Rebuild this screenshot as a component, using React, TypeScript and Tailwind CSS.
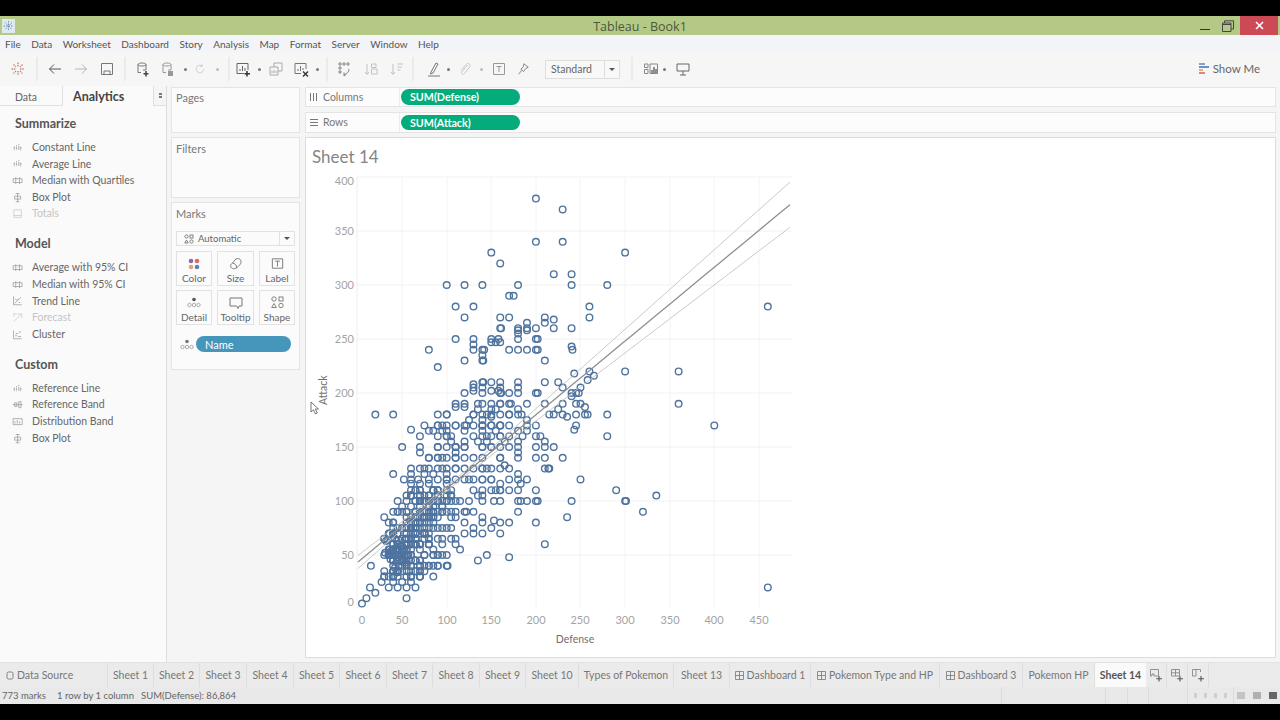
import React from "react";

// rows of the scatter plot: attack -> list of defense values
const rows: [number, number[]][] = [
  [380, [200]], [370, [230]], [340, [200, 230]], [330, [150, 300]], [320, [160]], [310, [220, 240]],
  [300, [100, 120, 140, 180, 240, 280]], [290, [170, 175]], [280, [110, 130, 260, 460]],
  [270, [120, 160, 170, 210, 260]], [268, [220]], [265, [190, 210]], [260, [160, 161, 180, 190, 200, 220, 240]],
  [258, [180, 190]], [255, [180]], [250, [110, 130, 150, 158, 180, 200, 202]], [247, [150, 155, 160]],
  [245, [130]], [243, [240]], [240, [80, 130, 140, 142, 170, 180, 190, 200, 202, 241]],
  [235, [140]], [230, [120, 140, 141, 210]], [224, [90]], [220, [260, 300, 360]], [216, [265]], [218, [243]],
  [212, [258]], [210, [140, 141, 150, 160, 180, 210, 225]], [208, [130]], [205, [130, 140, 160, 180, 230, 250]],
  [202, [130, 150, 158]], [200, [120, 140, 160, 161, 170, 180, 200, 202, 240, 245, 248]], [197, [240]],
  [190, [110, 120, 135, 150, 160, 170, 172, 190, 210, 230, 245, 250, 360]], [187, [255, 110, 120]],
  [185, [135, 150, 155, 180, 225]], [180, [20, 40, 90, 100, 130, 140, 145, 160, 170, 180, 184, 215, 220, 230, 245, 255, 258, 280]],
  [178, [235, 150]], [175, [125, 140, 190]], [170, [75, 90, 95, 110, 120, 122, 130, 140, 150, 160, 170, 190, 200, 245, 400]],
  [166, [243, 60]], [165, [80, 85, 95, 100, 120, 140, 155, 180, 190]],
  [160, [70, 90, 100, 105, 130, 140, 145, 160, 170, 185, 200, 205, 280]], [155, [105, 120, 135, 145, 180, 165, 210]],
  [150, [50, 70, 100, 120, 140, 150, 160, 170, 180, 200, 210, 220]], [145, [70, 110, 180]],
  [140, [80, 90, 95, 100, 110, 130, 140, 160, 180, 200, 210, 230]], [133, [165]],
  [130, [60, 70, 75, 80, 90, 95, 100, 110, 120, 130, 140, 145, 160, 170, 210, 214, 215]],
  [125, [40, 60, 75, 85, 100, 180]], [120, [52, 60, 68, 80, 90, 100, 110, 120, 125, 130, 140, 150, 180, 190, 250]],
  [116, [60, 70, 80, 100, 160, 183]], [110, [60, 70, 85, 90, 100, 105, 130, 140, 150, 155, 160, 170, 180, 200, 290]],
  [105, [55, 60, 70, 80, 100, 105, 135, 140, 335]],
  [100, [45, 65, 70, 75, 80, 90, 100, 110, 115, 125, 140, 153, 160, 180, 183, 190, 200, 202, 240, 300, 301]],
  [90, [40, 45, 110, 120, 122, 130, 180, 320]], [85, [140, 235]], [82, [153]],
  [80, [120, 140, 160, 170, 200]], [75, [130, 150]], [70, [120, 130, 140, 160]],
  [65, [110]], [60, [110, 210]], [55, [115]], [50, [90, 95, 100, 145]], [48, [170]], [45, [135]],
  [40, [15, 60, 70, 80, 85, 90, 100, 101]], [35, [30]], [30, [85, 30, 35, 40, 45]],
  [25, [27, 60, 40, 50]], [20, [14, 35, 55, 65, 45, 460]], [15, [20]], [10, [10, 55]], [5, [5]],
];

const makePoints = () => {
  const pts: [number, number][] = [];
  rows.forEach(([a, ds]) => ds.forEach((d) => pts.push([d, a])));
  // the dense part near the origin
  let s = 1234;
  const rnd = () => {
    s = (s * 16807) % 2147483647;
    return s / 2147483647;
  };
  const gauss = () => (rnd() + rnd() + rnd() + rnd() - 2) * 1.2;
  for (let i = 0; i < 330; i++) {
    const t = gauss();
    const d = 65 + t * 30 + gauss() * 20;
    const a = 70 + t * 28 + gauss() * 26;
    if (d < 28 || a < 28 || d > 108 || a > 112) continue;
    pts.push([Math.round(d / 5) * 5, Math.round(a / 5) * 5]);
  }
  for (let i = 0; i < 35; i++) {
    pts.push([Math.round(46 + gauss() * 12), Math.round(52 + gauss() * 12)]);
  }
  for (let i = 0; i < 40; i++) {
    const d = 75 + rnd() * 100;
    const a = 110 + rnd() * 80;
    pts.push([Math.round(d / 10) * 10, Math.round(a / 10) * 10]);
  }
  return pts;
};

const points = makePoints();
const px = (d: number) => 357.5 + d * 0.892;
const py = (a: number) => 609 - a * 1.08;

const line = (offset: number) => {
  const out: string[] = [];
  for (let x = 358; x <= 794; x += 12) {
    const y = 562 - (x - 358) * (359 / 434);
    const w = Math.sqrt(6 + Math.pow((x - 450) * 0.066, 2));
    out.push(`${x},${(y + offset * w).toFixed(1)}`);
  }
  return out.join(" ");
};

const Chart = () => (
  <svg viewBox="306 172 969 484" className="w-[969px] h-[484px] block" style={{ fontFamily: "Lato, sans-serif" }}>
    {[402, 447, 491, 536, 580, 625, 670, 714, 759].map((x) => (
      <line key={x} x1={x} x2={x} y1={177} y2={609} stroke="#f4f4f4" />
    ))}
    {[177, 231, 285, 339, 393, 447, 501, 555].map((y) => (
      <line key={y} x1={357} x2={792} y1={y} y2={y} stroke="#f2f2f2" />
    ))}
    <line x1={357} x2={357} y1={177} y2={609} stroke="#efefef" />
    {points.map(([d, a], i) => (
      <circle key={i} cx={px(d)} cy={py(a)} r={3.3} fill="none" stroke="#4f739f" strokeWidth={1.4} />
    ))}
    <polyline points={line(0)} fill="none" stroke="#8f8f8f" strokeWidth={1.3} />
    <polyline points={line(-1)} fill="none" stroke="#c4c4c4" strokeWidth={0.9} />
    <polyline points={line(1)} fill="none" stroke="#c4c4c4" strokeWidth={0.9} />
    {[["400", 185], ["350", 235], ["300", 289], ["250", 343], ["200", 397], ["150", 451], ["100", 505], ["50", 559], ["0", 606]].map(([t, y]) => (
      <text key={t} x={354} y={y} textAnchor="end" fontSize={11} fill="#a3a3a3">{t}</text>
    ))}
    {[["0", 362], ["50", 402], ["100", 447], ["150", 491], ["200", 536], ["250", 580], ["300", 625], ["350", 670], ["400", 714], ["450", 759]].map(([t, x]) => (
      <text key={t} x={x} y={624} textAnchor="middle" fontSize={11} fill="#a3a3a3">{t}</text>
    ))}
    <text x={575} y={643} textAnchor="middle" fontSize={10.5} fill="#6f6f6f">Defense</text>
    <text transform="translate(327 405) rotate(-90)" x={0} y={0} fontSize={10.5} fill="#6f6f6f">Attack</text>
  </svg>
);

const Ico = ({ children, c = "#8a8a8a", s = 16 }: { children: React.ReactNode; c?: string; s?: number }) => (
  <svg width={s} height={s} viewBox="0 0 16 16" fill="none" stroke={c} strokeWidth={1}>{children}</svg>
);

const Dd = ({ c = "#777" }: { c?: string }) => <span className="w-[3px] h-[3px] shrink-0 rounded-full" style={{ background: c }} />;
const Sep = () => <span className="w-[2px] h-[24px] bg-[#ebebeb] shrink-0" />;

const Cyl = ({ c = "#777", mark }: { c?: string; mark: React.ReactNode }) => (
  <Ico c={c}>
    <path d="M3 3.5C3 1.5 11 1.5 11 3.5V9H8M3 3.5V11.5H6M3 3.5C3 5.5 11 5.5 11 3.5" />
    {mark}
  </Ico>
);

const Toolbar = () => (
  <div className="h-[34px] bg-[#f6f6f6] flex items-center text-[#555] shrink-0">
    <div className="w-[36px] flex justify-center">
      <Ico c="#c98a7c">
        <path d="M8 1.5V6M8 10V14.5M1.5 8H6M10 8H14.5M3.5 3.5L6 6M10 10L12.5 12.5M12.5 3.5L10 6M6 10L3.5 12.5" strokeDasharray="1.5 0.8" strokeWidth={1.4} />
      </Ico>
    </div>
    <Sep />
    <div className="w-[34px] flex justify-center"><Ico c="#555"><path d="M14 8H2.5M7 3.5L2.5 8L7 12.5" /></Ico></div>
    <div className="w-[18px] flex justify-center"><Ico c="#b5b5b5"><path d="M2 8H13.5M9 3.5L13.5 8L9 12.5" /></Ico></div>
    <div className="w-[34px] flex justify-center"><Ico c="#777"><path d="M2.5 2.5H13.5V13.5H2.5ZM5 13.5V10H11V13.5" /></Ico></div>
    <Sep />
    <div className="w-[34px] flex justify-center"><Cyl mark={<path d="M11 10V15.5M8.5 12.8H13.5" stroke="#444" strokeWidth={1.5} />} /></div>
    <div className="w-[16px] flex justify-center"><Cyl c="#999" mark={<rect x="8.5" y="10.5" width="4" height="4" fill="#999" />} /></div>
    <div className="w-[18px] flex justify-center"><Dd /></div>
    <div className="w-[12px] flex justify-center"><Ico c="#c4c4c4" s={14}><path d="M13 8A5 5 0 1 1 11 4M11 1.5V4.5H8" /></Ico></div>
    <div className="w-[22px] flex justify-center"><Dd c="#bbb" /></div>
    <Sep />
    <div className="w-[26px] flex justify-center">
      <Ico c="#666"><path d="M2 2.5H13V9M2 2.5V12.5H9M5 10V8M7.5 10V5M10 10V7" /><path d="M12 10V15.5M9.5 12.8H15" stroke="#333" strokeWidth={1.5} /></Ico>
    </div>
    <div className="w-[6px] flex justify-center"><Dd /></div>
    <div className="w-[28px] flex justify-center"><Ico c="#aaa"><path d="M2 6H10V14H2ZM6 6V2H14V10H10M4 12V10M6 12V9M8 12V10" /></Ico></div>
    <div className="w-[22px] flex justify-center">
      <Ico c="#777"><path d="M2 2.5H13V8M2 2.5V12.5H8M5 10V8M7.5 10V5M10 9V7" /><path d="M10 10.5L15 15.5M15 10.5L10 15.5" stroke="#333" strokeWidth={1.4} /></Ico>
    </div>
    <div className="w-[10px] flex justify-center"><Dd /></div>
    <div className="w-[4px]" />
    <Sep />
    <div className="w-[32px] flex justify-center"><Ico c="#888"><path d="M3 2H5V4H3ZM7 2H9V4H7ZM11 2H13V4H11ZM3 6H5V8H3ZM3 10H5V12H3ZM13 8C13 11 11 13 8 13.5M8 11.5V15L10 13.5" /></Ico></div>
    <div className="w-[22px] flex justify-center"><Ico c="#c2c2c2"><path d="M4 3V13M2 11L4 13.5L6 11M8.5 3H13V6.5H8.5ZM8.5 8H14V13H8.5Z" /></Ico></div>
    <div className="w-[30px] flex justify-center"><Ico c="#c2c2c2"><path d="M4 3V13M2 11L4 13.5L6 11M8.5 3H14M8.5 6H13M8.5 9H11.5" /></Ico></div>
    <Sep />
    <div className="w-[8px]" />
    <div className="w-[24px] flex justify-center"><Ico c="#777"><path d="M5 11L10 2L12 3L7 12L4.5 13ZM2 15H14" /></Ico></div>
    <div className="w-[4px] flex justify-center"><Dd /></div>
    <div className="w-[30px] flex justify-center"><Ico c="#c9c9c9"><path d="M10.5 4L5 10.5C3.5 12.5 6 14.5 7.5 12.5L12.5 6C14 3.5 11 1 9 3.5L4 9.5" /></Ico></div>
    <div className="w-[2px] flex justify-center"><Dd c="#bbb" /></div>
    <div className="w-[34px] flex justify-center"><Ico c="#999"><path d="M2.5 2.5H13.5V13.5H2.5ZM5.5 5.5H10.5M8 5.5V11" /></Ico></div>
    <div className="w-[14px] flex justify-center"><Ico c="#777"><path d="M9 2L14 6L11 7.5L8.5 11L5.5 8L8.5 5.5ZM6.5 9.5L3 14" /></Ico></div>
    <div className="w-[15px]" />
    <div className="w-[75px] h-[19px] border border-[#dedede] bg-[#f8f8f8] flex items-center text-[10.5px] text-[#666] pl-[5px] shrink-0">
      <span className="flex-1 pt-[1px]">Standard</span>
      <span className="w-[15px] h-full border-l border-[#dedede] flex items-center justify-center">
        <span className="w-0 h-0 border-x-[3px] border-x-transparent border-t-[3px] border-t-[#555]" />
      </span>
    </div>
    <div className="w-[11px]" />
    <Sep />
    <div className="w-[6px]" />
    <div className="w-[24px] flex justify-center">
      <Ico c="#888"><path d="M1.5 3H5V6.5H1.5ZM1.5 8.5H5V12.5H1.5ZM7 3H14.5V12.5H7Z" /><path d="M9 12V9M11 12V6M13 12V8" stroke="#666" strokeWidth={1.4} /></Ico>
    </div>
    <div className="w-[2px] flex justify-center"><Dd /></div>
    <div className="w-[36px] flex justify-center"><Ico c="#666"><path d="M2 3H14V10H2ZM8 10V14M5 14H11" /></Ico></div>
    <div className="ml-auto flex items-center gap-[4px] pr-[20px] text-[11.5px] text-[#666]">
      <svg width="10" height="14" viewBox="0 0 10 14">
        <rect x="0" y="1" width="6" height="2" fill="#8aa0c8" />
        <rect x="0" y="4" width="10" height="2" fill="#6f8fc9" />
        <rect x="0" y="7" width="4" height="2" fill="#e6b07a" />
        <rect x="0" y="10" width="6" height="2" fill="#dd8585" />
      </svg>
      <span>Show Me</span>
    </div>
  </div>
);

const bars = <path d="M3 6V11M6 4V11M9 2.5V11M11.5 6V11M2 8H13" strokeDasharray="2 1" />;
const band = <path d="M1.5 5H13.5V10H1.5ZM5 3V12M10 3V12" />;
const box = <path d="M7.5 2V13M3.5 5.5H11.5V9.5H3.5ZM5 2H10M5 13H10" />;

const Item = ({ icon, label, off }: { icon: React.ReactNode; label: string; off?: boolean }) => (
  <div className={`h-[16.6px] flex items-center gap-[8px] pl-[12px] text-[10.5px] ${off ? "text-[#c4c4c4]" : "text-[#666]"}`}>
    <Ico c={off ? "#c8c8c8" : "#9a9a9a"} s={12}>{icon}</Ico>
    <span>{label}</span>
  </div>
);

const Section = ({ title, children }: { title: string; children: React.ReactNode }) => (
  <div className="mb-[13px]">
    <div className="pl-[15px] text-[12.5px] font-bold text-[#555] h-[18px] mb-[6.5px] leading-[18px]">{title}</div>
    {children}
  </div>
);

const AnalyticsPane = () => (
  <div className="w-[167px] shrink-0 bg-[#fafafa] border-r border-[#dcdcdc] h-full">
    <div className="h-[21px] flex border-b border-transparent">
      <div className="w-[63px] border-r border-b border-[#e0e0e0] pl-[15px] text-[10.5px] text-[#666] leading-[22px]">Data</div>
      <div className="w-[90px] pl-[10px] text-[12.5px] font-bold text-[#444] leading-[22px]">Analytics</div>
      <div className="flex-1 border-l border-b border-[#e0e0e0] flex flex-col items-center justify-center gap-[1px] bg-[#f5f5f5]">
        <span className="w-[3px] h-[2px] bg-[#777]" />
        <span className="w-[3px] h-[2px] bg-[#777]" />
      </div>
    </div>
    <div className="pt-[8px]">
      <Section title="Summarize">
        <Item icon={bars} label="Constant Line" />
        <Item icon={bars} label="Average Line" />
        <Item icon={band} label="Median with Quartiles" />
        <Item icon={box} label="Box Plot" />
        <Item icon={<path d="M2.5 2.5H12.5V12.5H2.5ZM2.5 10H12.5" />} label="Totals" off />
      </Section>
      <Section title="Model">
        <Item icon={band} label="Average with 95% CI" />
        <Item icon={band} label="Median with 95% CI" />
        <Item icon={<path d="M2 2V13H13M3.5 11L12 3M4 5L6 7L8 5M9 10H11" />} label="Trend Line" />
        <Item icon={<path d="M2 13L12 3M7 2.5H13V8.5M2.5 6V2.5H6" />} label="Forecast" off />
        <Item icon={<path d="M2 2V13H13M4 9H7M5 6H8M9 4H12M8 10H12" />} label="Cluster" />
      </Section>
      <Section title="Custom">
        <Item icon={bars} label="Reference Line" />
        <Item icon={<path d="M1 7.5H14M3.5 5H6.5V10H3.5ZM9 3.5H12V11.5H9Z" />} label="Reference Band" />
        <Item icon={<path d="M1.5 3.5H13.5V11.5H1.5ZM4 10V7M7 10V5M10 10V7" />} label="Distribution Band" />
        <Item icon={box} label="Box Plot" />
      </Section>
    </div>
  </div>
);

const Card = ({ title, className }: { title: string; className: string }) => (
  <div className={`bg-[#fbfbfb] border border-[#e4e4e4] pl-[4px] text-[11px] text-[#777] ${className}`}>{title}</div>
);

const MarkBtn = ({ icon, label, className }: { icon: React.ReactNode; label: string; className: string }) => (
  <div className={`h-[35px] border border-[#e2e2e2] flex flex-col items-center pt-[3px] text-[10px] leading-[12px] text-[#666] ${className}`}>
    <span className="h-[17px] flex items-center">{icon}</span>
    <span>{label}</span>
  </div>
);

const dots = (
  <svg width="14" height="14" viewBox="0 0 14 14">
    <circle cx="4" cy="4" r="2.3" fill="#8d6aa6" />
    <circle cx="10" cy="4" r="2.3" fill="#df6b6b" />
    <circle cx="4" cy="10" r="2.3" fill="#e9a070" />
    <circle cx="10" cy="10" r="2.3" fill="#5b84b8" />
  </svg>
);

const detail = (c = "#555") => (
  <svg width="14" height="11" viewBox="0 0 14 11" fill="none" stroke="#999" strokeWidth="0.8">
    <circle cx="7" cy="2.5" r="1.8" fill={c} stroke="none" />
    <circle cx="2.5" cy="8" r="1.7" />
    <circle cx="7" cy="8" r="1.7" />
    <circle cx="11.5" cy="8" r="1.7" />
  </svg>
);

const MarksCard = () => (
  <div className="bg-[#fbfbfb] border border-[#e4e4e4] h-[168px] px-[4px] pt-[4px]">
    <div className="text-[11px] text-[#777] h-[14px] leading-[14px] mb-[10px]">Marks</div>
    <div className="h-[15px] border border-[#e2e2e2] flex items-center text-[9.5px] text-[#666]">
      <span className="flex items-center gap-[4px] pl-[7px] pt-[1px] flex-1">
        <svg width="10" height="10" viewBox="0 0 10 10" fill="none" stroke="#777" strokeWidth="0.9">
          <circle cx="2.5" cy="2.5" r="1.6" />
          <rect x="6" y="1" width="3" height="3" />
          <path d="M2.5 6L4.2 9H.8Z" />
          <circle cx="7.5" cy="7.5" r="1.6" />
        </svg>
        Automatic
      </span>
      <span className="w-[15px] h-full border-l border-[#e2e2e2] flex items-center justify-center">
        <span className="w-0 h-0 border-x-[3px] border-x-transparent border-t-[3px] border-t-[#555]" />
      </span>
    </div>
    <div className="flex justify-between mt-[5px]">
      <MarkBtn icon={dots} label="Color" className="w-[36px]" />
      <MarkBtn
        icon={<Ico c="#777"><path d="M9.5 2.5C13 2.5 14 6 12 8.5C10 11 7.5 13.5 4.5 12.5C2 11.5 2 8.5 4.5 7C6.5 5.5 7 2.5 9.5 2.5Z" /><path d="M4.5 7C7 7.5 9 9.5 8.5 12" /></Ico>}
        label="Size"
        className="w-[37px]"
      />
      <MarkBtn icon={<Ico c="#777" s={15}><path d="M2.5 3H13.5V13H2.5ZM5.5 5.5H10.5M8 5.5V11" /></Ico>} label="Label" className="w-[36px]" />
    </div>
    <div className="flex justify-between mt-[4px]">
      <MarkBtn icon={detail()} label="Detail" className="w-[36px]" />
      <MarkBtn icon={<Ico c="#777"><path d="M2 3H14V11H11L10 13.5L8.5 11H2Z" /></Ico>} label="Tooltip" className="w-[37px]" />
      <MarkBtn
        icon={
          <svg width="15" height="15" viewBox="0 0 15 15" fill="none" stroke="#777" strokeWidth="0.9">
            <circle cx="4" cy="4" r="2.2" />
            <rect x="9" y="2" width="4" height="4" />
            <path d="M4 8.5L6.3 12.5H1.7Z" />
            <circle cx="11" cy="10.5" r="2.2" />
          </svg>
        }
        label="Shape"
        className="w-[36px]"
      />
    </div>
    <div className="flex items-center mt-[11px] pl-[4px] gap-[2px]">
      {detail("#777")}
      <span className="w-[95px] h-[16px] rounded-full bg-[#4695bb] text-white text-[11px] leading-[18px] pl-[9px]">Name</span>
    </div>
  </div>
);

const Shelf = ({ icon, label, pill, className }: { icon: React.ReactNode; label: string; pill: string; className: string }) => (
  <div className={`bg-[#fcfcfc] border border-[#e4e4e4] flex items-center ${className}`}>
    <div className="w-[94px] h-full flex items-center gap-[4px] pl-[2px] border-r border-[#ececec] text-[10.5px] text-[#777]">
      <span className="w-[11px] flex justify-center">{icon}</span>
      <span className="pt-[1px]">{label}</span>
    </div>
    <span className="ml-[1px] w-[119px] h-[15.5px] rounded-full bg-[#04ac7c] text-white text-[10.7px] font-bold leading-[16px] pl-[9px]">{pill}</span>
  </div>
);

const tabs: [string, string, number][] = [
  ["Sheet 1", "w-[46px]", 0],
  ["Sheet 2", "w-[46px]", 0],
  ["Sheet 3", "w-[47px]", 0],
  ["Sheet 4", "w-[47px]", 0],
  ["Sheet 5", "w-[46px]", 0],
  ["Sheet 6", "w-[47px]", 0],
  ["Sheet 7", "w-[46px]", 0],
  ["Sheet 8", "w-[47px]", 0],
  ["Sheet 9", "w-[46px]", 0],
  ["Sheet 10", "w-[53px]", 0],
  ["Types of Pokemon", "w-[95px]", 0],
  ["Sheet 13", "w-[56px]", 0],
  ["Dashboard 1", "w-[81px]", 1],
  ["Pokemon Type and HP", "w-[129px]", 1],
  ["Dashboard 3", "w-[83px]", 1],
  ["Pokemon HP", "w-[72px]", 0],
];

const TabBar = () => (
  <div className="h-[25px] bg-[#ebebeb] flex text-[10.5px] text-[#777] border-t border-[#e2e2e2] shrink-0">
    <div className="w-[108px] flex items-center gap-[3px] pl-[6px] pt-[1px] border-r border-[#dedede]">
      <svg width="8" height="9" viewBox="0 0 8 9" fill="none" stroke="#777" strokeWidth="0.9"><rect x="1" y="1" width="6" height="7" rx="1.5" /></svg>
      Data Source
    </div>
    {tabs.map(([t, w, dash]) => (
      <div key={t} className={`${w} flex items-center justify-center gap-[3px] pt-[1px] border-r border-[#dedede] whitespace-nowrap`}>
        {dash === 1 && (
          <svg width="9" height="9" viewBox="0 0 9 9" fill="none" stroke="#777" strokeWidth="0.8"><path d="M.5.5H8.5V8.5H.5ZM4.5.5V8.5M.5 4.5H8.5" /></svg>
        )}
        {t}
      </div>
    ))}
    <div className="w-[51px] bg-[#fafafa] flex items-center justify-center pt-[1px] font-bold text-[#555]">Sheet 14</div>
    {[
      "M1.5 1.5H9.5V8H5V6H3V8H1.5Z",
      "M1.5 1.5H9.5V8H1.5ZM5.5 1.5V8M1.5 4.8H9.5",
      "M1.5 1.5H9.5V4M1.5 1.5V8H5M5 1.5V8",
    ].map((d) => (
      <div key={d} className="w-[21px] flex items-center justify-center border-r border-[#dedede]">
        <svg width="14" height="14" viewBox="0 0 14 14" fill="none" stroke="#888" strokeWidth="0.9">
          <path d={d} />
          <path d="M10 8V13.5M7.2 10.8H13" stroke="#555" strokeWidth="1.1" />
        </svg>
      </div>
    ))}
  </div>
);

const StatusBar = () => (
  <div className="h-[17px] bg-[#e9e9e9] flex items-center text-[9.5px] text-[#666] shrink-0">
    <span className="ml-[2px] w-[55px] pt-[1px]">773 marks</span>
    <span className="w-[84px] pt-[1px]">1 row by 1 column</span>
    <span className="w-[860px] pt-[1px]">SUM(Defense): 86,864</span>
    <span className="w-[104px] h-full border-l border-[#dcdcdc]" />
    <span className="w-[22px] h-full border-l border-[#dcdcdc]" />
    <span className="w-[21px] h-full border-l border-[#dcdcdc]" />
    <span className="w-[39px] h-full border-l border-[#dcdcdc]" />
    <span className="w-[46px] h-full border-l border-[#dcdcdc] flex items-center justify-center gap-[7px]">
      <span className="w-[3px] h-[5px] bg-[#cfcfcf]" />
      <span className="w-[3px] h-[5px] bg-[#cfcfcf]" />
      <span className="w-[3px] h-[5px] bg-[#cfcfcf]" />
      <span className="w-[3px] h-[5px] bg-[#cfcfcf]" />
    </span>
    <span className="flex-1 h-full border-l border-[#dcdcdc] flex items-center justify-center gap-[8px]">
      <span className="w-[8px] h-[7px] bg-[#c4c4c4]" />
      <span className="w-[8px] h-[7px] bg-[#b0b0b0]" />
      <span className="w-[8px] h-[7px] bg-[#666]" />
    </span>
  </div>
);

export default function App() {
  return (
    <div className="w-[1280px] h-[720px] bg-black overflow-hidden flex flex-col pt-[16px] pb-[16px]" style={{ fontFamily: "Lato, sans-serif" }}>
      <div className="h-[19px] bg-[#b5c986] flex items-center shrink-0">
        <div className="flex-1">
          <svg className="ml-[2px]" width="13" height="14" viewBox="0 0 13 14">
            <rect width="13" height="14" fill="#dfe8ee" />
            <path d="M6.5 2V12M1.5 7H11.5M3 3.5L10 10.5M10 3.5L3 10.5" stroke="#6d93b5" strokeWidth="1" strokeDasharray="1.5 1" />
          </svg>
        </div>
        <span className="text-[12.5px] text-[#4b5a3a] pt-[3px]" style={{ fontFamily: "'Open Sans', sans-serif" }}>Tableau - Book1</span>
        <div className="flex-1 flex items-center justify-end h-full">
          <svg className="mr-[11px]" width="12" height="12" viewBox="0 0 12 12"><path d="M1 9.5H11" stroke="#333" strokeWidth="1" /></svg>
          <svg className="mr-[6px]" width="12" height="12" viewBox="0 0 12 12" fill="none" stroke="#444"><path d="M.5 3H9V11.5H.5ZM.5 4.5H9M2.5 3V.8H11.5V9H9" /></svg>
          <div className="w-[38px] h-full mr-[2px] bg-[#cc4a55] flex items-center justify-center">
            <svg width="9" height="9" viewBox="0 0 9 9"><path d="M1 1L8 8M8 1L1 8" stroke="#fff" strokeWidth="1.6" /></svg>
          </div>
        </div>
      </div>
      <div className="h-[17px] bg-[#f2f4f8] flex items-center gap-[10.5px] pl-[5px] pt-[2px] text-[10px] text-[#555] shrink-0">
        {["File", "Data", "Worksheet", "Dashboard", "Story", "Analysis", "Map", "Format", "Server", "Window", "Help"].map((m) => (
          <span key={m}>{m}</span>
        ))}
      </div>
      <Toolbar />
      <div className="flex-1 flex bg-[#f5f5f5] min-h-0">
        <AnalyticsPane />
        <div className="w-[138px] shrink-0 pl-[4px] pr-[5px] flex flex-col gap-[4px] pt-[1px]">
          <Card title="Pages" className="h-[46px] pt-[2px]" />
          <Card title="Filters" className="h-[61px] pt-[3px]" />
          <MarksCard />
        </div>
        <div className="flex-1 flex flex-col pr-[4px] pt-[1px] min-w-0">
          <Shelf
            icon={<span className="flex gap-[2px]"><span className="w-[1px] h-[8px] bg-[#777]" /><span className="w-[1px] h-[8px] bg-[#777]" /><span className="w-[1px] h-[8px] bg-[#777]" /></span>}
            label="Columns"
            pill="SUM(Defense)"
            className="h-[20px] mb-[5px]"
          />
          <Shelf
            icon={<span className="flex flex-col gap-[2px]"><span className="w-[8px] h-[1px] bg-[#777]" /><span className="w-[8px] h-[1px] bg-[#777]" /><span className="w-[8px] h-[1px] bg-[#777]" /></span>}
            label="Rows"
            pill="SUM(Attack)"
            className="h-[21px] mb-[4px]"
          />
          <div className="h-[521px] bg-white border border-[#dcdcdc] relative">
            <div className="h-[34px] pl-[6px] pt-[8px] text-[17px] leading-[22px] text-[#858585]">Sheet 14</div>
            <Chart />
            <svg className="absolute left-[4px] top-[263px]" width="10" height="14" viewBox="0 0 10 14" fill="#fff" stroke="#555" strokeWidth="0.8">
              <path d="M1 1V11L3.5 8.8L5.5 13L7.3 12L5.3 8H8.5Z" />
            </svg>
          </div>
        </div>
      </div>
      <TabBar />
      <StatusBar />
    </div>
  );
}
